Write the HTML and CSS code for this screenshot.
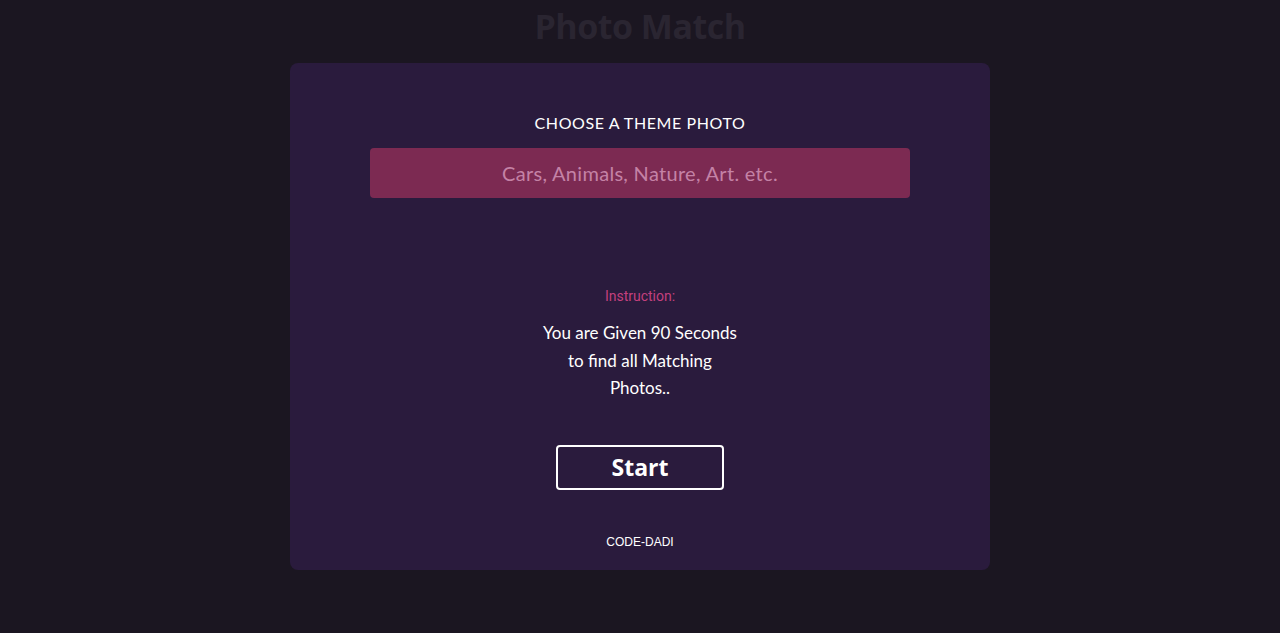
FILE: index.html
```html
<!DOCTYPE html>
<html lang="en">
<head>
<meta charset="utf-8">
<title>Photo Match</title>
<link rel="stylesheet" href="styles.css">
</head>
<body>
<h1 class="title">Photo Match</h1>
<main class="card">
  <h2 class="theme-label">CHOOSE A THEME PHOTO</h2>
  <input class="theme-input" type="text" placeholder="Cars, Animals, Nature, Art. etc.">
  <p class="instr-label">Instruction:</p>
  <p class="instr-text">You are Given 90 Seconds to find all Matching Photos..</p>
  <button class="start-btn" type="button">Start</button>
  <p class="credit">CODE-DADI</p>
</main>
</body>
</html>
```

FILE: styles.css
```css
html, body {
  margin: 0;
  padding: 0;
  background: #1b1621;
  height: 100%;
}
body {
  font-family: Lato, "Open Sans", sans-serif;
  color: #fff;
  display: flex;
  flex-direction: column;
  align-items: center;
}
.title {
  margin: 6px 0 0;
  font-family: "Open Sans", sans-serif;
  font-weight: 700;
  font-size: 34px;
  line-height: 40px;
  color: #2a2531;
  letter-spacing: -0.5px;
}
.card {
  margin-top: 17px;
  width: 700px;
  box-sizing: border-box;
  height: 507px;
  background: #2a1b3d;
  border-radius: 8px;
  display: flex;
  flex-direction: column;
  align-items: center;
  padding-top: 50px;
}
.theme-label {
  margin: 0;
  font-size: 16px;
  line-height: 20px;
  font-weight: 400;
  letter-spacing: 0.6px;
}
.theme-input {
  margin-top: 15px;
  width: 540px;
  height: 50px;
  box-sizing: border-box;
  border: none;
  border-radius: 4px;
  background: #7c2a52;
  font-family: Lato, "Open Sans", sans-serif;
  font-size: 20px;
  letter-spacing: 0.3px;
  text-align: center;
  color: #fff;
  outline: none;
}
.theme-input::placeholder {
  color: #c482a6;
}
.instr-label {
  margin: 90px 0 0;
  font-family: Roboto, sans-serif;
  font-size: 14px;
  line-height: 17px;
  color: #c4407e;
}
.instr-text {
  margin: 14px 0 0;
  width: 200px;
  text-align: center;
  font-size: 17px;
  line-height: 27.5px;
}
.start-btn {
  margin-top: 43px;
  width: 168px;
  height: 45px;
  box-sizing: border-box;
  background: transparent;
  border: 2px solid #fff;
  border-radius: 4px;
  color: #fff;
  font-family: "Open Sans", sans-serif;
  font-weight: 700;
  font-size: 23px;
  line-height: 1;
  padding: 0;
}
.credit {
  margin: 45px 0 0;
  font-family: "Liberation Sans", Arial, sans-serif;
  font-size: 12px;
  line-height: 14px;
  color: #fff;
}
```
